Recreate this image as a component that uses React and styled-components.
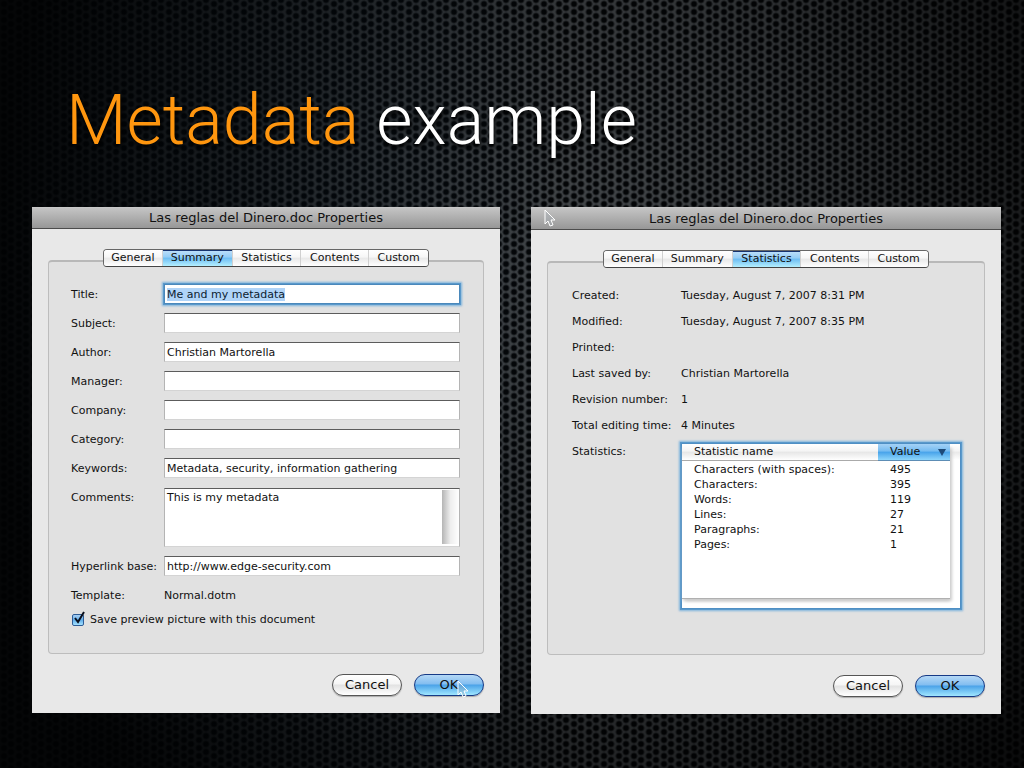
import React, { useEffect, useRef } from "react";
import styled, { createGlobalStyle, css } from "styled-components";

const uiFont = '"DejaVu Sans", sans-serif';

const Global = createGlobalStyle`
  * { box-sizing: border-box; }
  body { margin: 0; background: #000; font-family: ${uiFont}; color: #111; }
`;

const Slide = styled.main`
  min-height: 100vh;
  padding: 80px 23px 54px 32px;
  background:
    radial-gradient(ellipse 58% 95% at 57% 38%, transparent 0%, rgba(0, 0, 0, 0.25) 40%, rgba(0, 0, 0, 0.62) 75%, rgba(0, 0, 0, 0.88) 100%),
    linear-gradient(90deg, rgba(8, 24, 38, 0.5), rgba(8, 24, 38, 0.2) 40%, transparent 55%),
    radial-gradient(circle at 4px 4px, #040608 2px, transparent 4px) 0 0 / 15px 8px,
    radial-gradient(circle at 11px 4px, #040608 2px, transparent 4px) 0 4px / 15px 8px,
    #44484b;
`;

const Heading = styled.h1`
  margin: 0 0 47px 34px;
  font: 300 70px/80px Roboto, "Liberation Sans", sans-serif;
  color: #fff;
  text-shadow: 1px 3px 4px #000;
`;

const Accent = styled.span`
  color: #ff960f;
`;

const Windows = styled.div`
  display: grid;
  grid-template-columns: 468fr 470fr;
  align-items: start;
  gap: 31px;
`;

const Dialog = styled.section`
  position: relative;
  background: #e8e8e8;
`;

const TitleBar = styled.h2`
  margin: 0;
  height: ${(p) => (p.$tall ? 23 : 22)}px;
  border-top: 1px solid #c8c8c8;
  border-bottom: 1px solid #4c4c4c;
  background: linear-gradient(#c4c4c4, #979797);
  text-align: center;
  font-size: 13px;
  font-weight: 400;
  line-height: ${(p) => (p.$tall ? 21 : 20)}px;
`;

const Body = styled.div`
  padding: 20px 16px 17px;
`;

const Tabs = styled.nav`
  position: relative;
  display: flex;
  width: 326px;
  height: 18px;
  margin: 0 auto;
  border: 1px solid #666;
  border-bottom-color: #444;
  border-radius: 4px;
  overflow: hidden;
  background: #fff;
`;

const Tab = styled.button`
  flex: ${(p) => p.$grow} 1 0;
  padding: 0;
  border: 0;
  border-left: 1px solid #d0d0d0;
  background: linear-gradient(#fff, #f6f6f6 45%, #e8e8e8 50%, #fff);
  font: 11px/16px ${uiFont};
  color: #111;
  &:first-child { border-left: 0; }
  ${(p) => p.$active && css`
    background: linear-gradient(#c0e0fa, #93cdf6 45%, #6cbcf2 50%, #b4efff);
    box-shadow: inset 0 1px #16336f;
  `}
`;

const Panel = styled.div`
  min-height: 394px;
  margin-top: -7px;
  padding: ${(p) => (p.$wide ? "20px 23px 20px 24px" : "22px 23px 20px 22px")};
  border: 1px solid #bdbdbd;
  border-top: 2px solid #b8b8b8;
  border-radius: 4px;
  background: #e1e1e1;
  font-size: 11px;
`;

const Form = styled.form`
  display: grid;
  grid-template-columns: 93px 1fr;
  row-gap: 9px;
`;

const Label = styled.label`
  line-height: 22px;
  height: 20px;
`;

const Output = styled.output`
  line-height: 22px;
  height: 20px;
`;

const field = css`
  width: 100%;
  padding: 0 2px;
  border: 1px solid #b4b4b4;
  border-top-color: #5c5c5c;
  border-bottom-color: #d4d4d4;
  border-radius: 0;
  background: #fff;
  font: 11px/18px ${uiFont};
  color: #111;
  outline: none;
`;

const Input = styled.input`
  ${field}
  height: 20px;
  &::selection { background: #b0d4f8; color: #0c1c30; }
  ${(p) => p.$ring && css`
    border-color: #4a88bb;
    box-shadow: 0 0 0 1px #5a99cb, 0 0 2px 2px #7db3dc;
    caret-color: transparent;
  `}
`;

const Area = styled.textarea`
  ${field}
  display: block;
  height: 59px;
  margin-top: 1px;
  resize: none;
  overflow: hidden;
  background: linear-gradient(90deg, #b5b5b5, #eee 50%, #fff) right 0 top 1px / 17px 54px no-repeat, #fff;
`;

const CheckRow = styled.label`
  display: flex;
  align-items: center;
  gap: 6px;
  margin-top: 5px;
  line-height: 20px;
`;

const CheckHolder = styled.span`
  position: relative;
  display: flex;
  margin-left: 1px;
`;

const CheckInput = styled.input`
  appearance: none;
  width: 12px;
  height: 12px;
  margin: 0;
  border: 1px solid #2d5c96;
  border-radius: 2px;
  background: linear-gradient(#a9cff2, #62aeea 50%, #a4e2ff);
`;

const CheckMark = styled.svg`
  position: absolute;
  left: 1px;
  top: -3px;
  pointer-events: none;
`;

const Details = styled.dl`
  display: grid;
  grid-template-columns: 109px 1fr;
  margin: 0;
  line-height: 26px;
`;

const Term = styled.dt`
  white-space: nowrap;
`;

const Value = styled.dd`
  margin: 0;
`;

const ListBox = styled.div`
  height: 166px;
  margin-top: 4px;
  padding-right: 10px;
  border: 1px solid #4f8fc4;
  box-shadow: 0 0 0 1px #5a99cb, 0 0 2px 2px #7db3dc;
  background: linear-gradient(#fff, #f4f4f4 45%, #e9e9e9 50%, #fff) top / 100% 16px no-repeat, #fff;
`;

const ListBody = styled.div`
  height: 155px;
  border-bottom: 1px solid #b0b0b0;
  background: #fff;
  box-shadow: 0 3px 3px -1px #ccc, 3px 3px 3px -1px #ccc;
`;

const Table = styled.table`
  width: 100%;
  border-collapse: collapse;
  table-layout: fixed;
  line-height: 15px;
  tbody::before { content: ""; display: block; height: 1px; }
`;

const HeadCell = styled.th`
  position: relative;
  width: ${(p) => (p.$active ? "72px" : "auto")};
  height: 16px;
  padding: 0 0 0 12px;
  border-bottom: 1px solid ${(p) => (p.$active ? "#5d8db5" : "#aaa")};
  background: ${(p) => p.$active
    ? "linear-gradient(#a5d2f6, #74bbf1 45%, #46a2ea 50%, #8fd6fb)"
    : "linear-gradient(#fff, #f4f4f4 45%, #e6e6e6 50%, #fff)"};
  font-weight: 400;
  text-align: left;
`;

const SortArrow = styled.svg`
  position: absolute;
  right: 4px;
  top: 5px;
`;

const Cell = styled.td`
  height: 15px;
  padding: 0 0 0 12px;
`;

const Footer = styled.footer`
  display: flex;
  justify-content: flex-end;
  gap: 12px;
  margin-top: 20px;
`;

const Push = styled.button`
  width: 70px;
  height: 22px;
  padding: 0;
  border: 1px solid ${(p) => (p.$primary ? "#163a86" : "#555")};
  border-radius: 11px;
  background: ${(p) => p.$primary
    ? "linear-gradient(#b4d8f6, #82bdf0 45%, #4aa2e8 50%, #9fe6ff)"
    : "linear-gradient(#fff, #f5f5f5 45%, #e2e2e2 50%, #fff)"};
  box-shadow: 0 1px 1px #aaa;
  font: 13px/20px ${uiFont};
  color: #111;
`;

const Cursor = styled.svg`
  position: absolute;
  ${(p) => (p.$corner === "top" ? "left: 13px; top: 2px;" : "right: 30px; bottom: 14px;")}
  pointer-events: none;
`;

function Pointer({ corner }) {
  return (
    <Cursor $corner={corner} width="13" height="19" viewBox="0 0 13 19" aria-hidden="true">
      <path
        d="M1 1 L1 15 L4 12 L6 17 L9 16 L7 11 L11 11 Z"
        fill="rgba(160,170,180,0.3)"
        stroke="#fff"
        strokeWidth="1"
      />
    </Cursor>
  );
}

const tabs = [["General", 59], ["Summary", 70], ["Statistics", 69], ["Contents", 68], ["Custom", 60]];

function PropertiesDialog({ active, tall, pointer, children }) {
  return (
    <Dialog>
      <TitleBar $tall={tall}>Las reglas del Dinero.doc Properties</TitleBar>
      <Body>
        <Tabs>
          {tabs.map(([name, grow]) => (
            <Tab key={name} type="button" $grow={grow} $active={name === active}>{name}</Tab>
          ))}
        </Tabs>
        <Panel $wide={tall}>{children}</Panel>
        <Footer>
          <Push type="button">Cancel</Push>
          <Push type="button" $primary>OK</Push>
        </Footer>
      </Body>
      <Pointer corner={pointer} />
    </Dialog>
  );
}

const fields = [
  ["subject", "Subject:", ""],
  ["author", "Author:", "Christian Martorella"],
  ["manager", "Manager:", ""],
  ["company", "Company:", ""],
  ["category", "Category:", ""],
  ["keywords", "Keywords:", "Metadata, security, information gathering"],
];

function Summary() {
  const title = useRef(null);
  useEffect(() => {
    title.current.focus();
    title.current.select();
  }, []);
  return (
    <>
      <Form>
        <Label htmlFor="title">Title:</Label>
        <Input id="title" ref={title} $ring defaultValue="Me and my metadata" />
        {fields.map(([id, label, value]) => (
          <React.Fragment key={id}>
            <Label htmlFor={id}>{label}</Label>
            <Input id={id} defaultValue={value} />
          </React.Fragment>
        ))}
        <Label htmlFor="comments">Comments:</Label>
        <Area id="comments" defaultValue="This is my metadata" />
        <Label htmlFor="base">Hyperlink base:</Label>
        <Input id="base" defaultValue="http://www.edge-security.com" />
        <Label htmlFor="template">Template:</Label>
        <Output id="template">Normal.dotm</Output>
      </Form>
      <CheckRow>
        <CheckHolder>
          <CheckInput type="checkbox" defaultChecked />
          <CheckMark width="13" height="13" viewBox="0 0 13 13" aria-hidden="true">
            <path d="M2 7 L5 11 L11 1" fill="none" stroke="#0a0f1c" strokeWidth="2" />
          </CheckMark>
        </CheckHolder>
        Save preview picture with this document
      </CheckRow>
    </>
  );
}

const details = [
  ["Created:", "Tuesday, August 7, 2007 8:31 PM"],
  ["Modified:", "Tuesday, August 7, 2007 8:35 PM"],
  ["Printed:", ""],
  ["Last saved by:", "Christian Martorella"],
  ["Revision number:", "1"],
  ["Total editing time:", "4 Minutes"],
];

const counts = [
  ["Characters (with spaces):", 495],
  ["Characters:", 395],
  ["Words:", 119],
  ["Lines:", 27],
  ["Paragraphs:", 21],
  ["Pages:", 1],
];

function Statistics() {
  return (
    <Details>
      {details.map(([term, value]) => (
        <React.Fragment key={term}>
          <Term>{term}</Term>
          <Value>{value}</Value>
        </React.Fragment>
      ))}
      <Term>Statistics:</Term>
      <Value>
        <ListBox>
          <ListBody>
            <Table>
              <thead>
                <tr>
                  <HeadCell>Statistic name</HeadCell>
                  <HeadCell $active>
                    Value
                    <SortArrow width="8" height="7" viewBox="0 0 8 7" aria-hidden="true">
                      <path d="M0 0 H8 L4 7 Z" fill="#1d4a78" />
                    </SortArrow>
                  </HeadCell>
                </tr>
              </thead>
              <tbody>
                {counts.map(([name, value]) => (
                  <tr key={name}>
                    <Cell>{name}</Cell>
                    <Cell>{value}</Cell>
                  </tr>
                ))}
              </tbody>
            </Table>
          </ListBody>
        </ListBox>
      </Value>
    </Details>
  );
}

export default function App() {
  return (
    <Slide>
      <Global />
      <Heading><Accent>Metadata</Accent> example</Heading>
      <Windows>
        <PropertiesDialog active="Summary" pointer="bottom">
          <Summary />
        </PropertiesDialog>
        <PropertiesDialog active="Statistics" tall pointer="top">
          <Statistics />
        </PropertiesDialog>
      </Windows>
    </Slide>
  );
}
